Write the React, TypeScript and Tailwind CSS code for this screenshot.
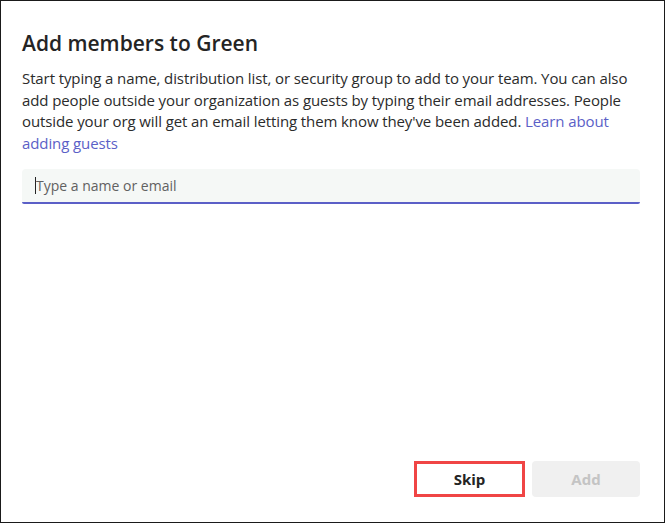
import React from 'react';

export default function App() {
  return (
    <div className="w-[665px] h-[523px] bg-white border border-[#1a1a1a] flex flex-col px-[21px] pr-[24px] pt-[28px] pb-[25px] text-[#242424]" style={{ fontFamily: '"Open Sans", "Noto Sans", sans-serif' }}>
      <h1 className="text-[21px] font-[550] leading-[29px]">Add members to Green</h1>

      <p className="mt-[10px] text-[15px] leading-[21.5px] text-[#2b2b2b] whitespace-nowrap tracking-[-0.1px]">
        Start typing a name, distribution list, or security group to add to your team. You can also
        <br />
        add people outside your organization as guests by typing their email addresses. People
        <br />
        outside your org will get an email letting them know they've been added.{' '}
        <a className="text-[#5b5fc7]">
          Learn about
          <br />
          adding guests
        </a>
      </p>

      {/* Search input */}
      <div className="mt-[15px] h-[35px] rounded-t-[4px] rounded-b-[2px] bg-[#f5f8f6] border-b-2 border-[#5b5fc7] flex items-center pl-[13px]">
        <span className="w-px h-[17px] bg-[#242424]" />
        <span className="text-[14px] text-[#616161]">Type a name or email</span>
      </div>

      <div className="flex-1" />

      <div className="flex justify-end items-center gap-[7px]">
        <button className="w-[111px] h-[36px] border-[3px] border-[#f04545] flex items-center justify-center text-[15px] font-bold text-[#242424]">
          Skip
        </button>
        <button className="w-[108px] h-[36px] rounded-[4px] bg-[#f0f0f0] flex items-center justify-center text-[15px] font-bold text-[#c4c4c4]">
          Add
        </button>
      </div>
    </div>
  );
}
